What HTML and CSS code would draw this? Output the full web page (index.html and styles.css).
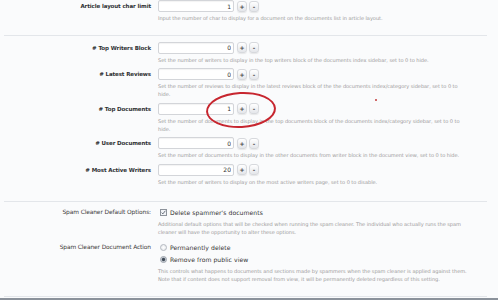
FILE: index.html
```html
<!DOCTYPE html>
<html lang="en">
<head>
    <meta charset="UTF-8">
    <title>Documents options</title>
    <link rel="stylesheet" href="styles.css">
</head>
<body>
    <div class="page">
        <div class="section first">
            <div class="row">
                <div class="label">Article layout char limit</div>
                <div class="control">
                    <div class="spin"><input class="num" type="text" value="1" readonly><button>+</button><button>-</button></div>
                    <p class="hint">Input the number of char to display for a document on the documents list in article layout.</p>
                </div>
            </div>
        </div>

        <div class="section second">
            <div class="row">
                <div class="label"># Top Writers Block</div>
                <div class="control">
                    <div class="spin"><input class="num" type="text" value="0" readonly><button>+</button><button>-</button></div>
                    <p class="hint">Set the number of writers to display in the top writers block of the documents index sidebar, set to 0 to hide.</p>
                </div>
            </div>
            <div class="row">
                <div class="label"># Latest Reviews</div>
                <div class="control">
                    <div class="spin"><input class="num" type="text" value="0" readonly><button>+</button><button>-</button></div>
                    <p class="hint">Set the number of reviews to display in the latest reviews block of the the documents index/category sidebar, set to 0 to hide.</p>
                </div>
            </div>
            <div class="row">
                <div class="label"># Top Documents</div>
                <div class="control">
                    <div class="spin"><input class="num" type="text" value="1" readonly><button>+</button><button>-</button></div>
                    <p class="hint">Set the number of documents to display in the top documents block of the documents index/category sidebar, set to 0 to hide.</p>
                </div>
            </div>
            <div class="row">
                <div class="label"># User Documents</div>
                <div class="control">
                    <div class="spin"><input class="num" type="text" value="0" readonly><button>+</button><button>-</button></div>
                    <p class="hint">Set the number of documents to display in the other documents from writer block in the document view, set to 0 to hide.</p>
                </div>
            </div>
            <div class="row">
                <div class="label"># Most Active Writers</div>
                <div class="control">
                    <div class="spin"><input class="num" type="text" value="20" readonly><button>+</button><button>-</button></div>
                    <p class="hint">Set the number of writers to display on the most active writers page, set to 0 to disable.</p>
                </div>
            </div>
        </div>

        <div class="section third">
            <div class="row plain">
                <div class="label">Spam Cleaner Default Options:</div>
                <div class="control">
                    <div class="choice"><span class="check"><svg viewBox="0 0 8 8" width="5" height="5"><path d="M1 4.2 L3 6.2 L7 1.2" fill="none" stroke="#4a5260" stroke-width="1.3"/></svg></span>Delete spammer's documents</div>
                    <p class="hint">Additional default options that will be checked when running the spam cleaner. The individual who actually runs the spam cleaner will have the opportunity to alter these options.</p>
                </div>
            </div>
            <div class="row plain">
                <div class="label">Spam Cleaner Document Action</div>
                <div class="control">
                    <div class="choice"><span class="radio"></span>Permanently delete</div>
                    <div class="choice"><span class="radio on"></span>Remove from public view</div>
                    <p class="hint">This controls what happens to documents and sections made by spammers when the spam cleaner is applied against them. Note that if content does not support removal from view, it will be permanently deleted regardless of this setting.</p>
                </div>
            </div>
        </div>

        <div class="circle"></div>
        <div class="dot"></div>
    </div>
</body>
</html>
```

FILE: styles.css
```css
body {
    margin: 0;
    background-color: #fafbfc;
    font-family: "DejaVu Sans", Tahoma, sans-serif;
    color: #333;
    overflow: hidden;
}

.page {
    position: relative;
    height: 298px;
    border-bottom: 2px solid #8b929b;
    overflow: hidden;
}

.section {
    display: flex;
    flex-direction: column;
    gap: 4.5px;
    margin: 0 11px 0 4px;
    border-bottom: 1px solid #e3e6ea;
}

.section.first {
    padding-bottom: 13px;
}

.section.second {
    padding-top: 5.5px;
    padding-bottom: 15.5px;
}

.section.third {
    padding-top: 5px;
    padding-bottom: 13px;
    gap: 6px;
}

.row {
    display: grid;
    grid-template-columns: 147px 1fr;
    column-gap: 7px;
}

.label {
    text-align: right;
    font-size: 5.5px;
    font-weight: bold;
    line-height: 12px;
    color: #2f3133;
    letter-spacing: -0.1px;
}

.row.plain .label {
    font-weight: normal;
    font-size: 5.9px;
    line-height: 10px;
    letter-spacing: -0.1px;
    color: #3a3a3a;
}

.spin {
    display: flex;
    align-items: center;
    gap: 2px;
    height: 12px;
}

.num {
    width: 76px;
    height: 12px;
    box-sizing: border-box;
    padding: 0 2px;
    margin: 0 1px 0 0;
    border: 1px solid #d3d5d9;
    border-radius: 2px;
    background-color: #fff;
    box-shadow: inset 0 1px 1px rgba(0, 0, 0, 0.05);
    text-align: right;
    font-family: inherit;
    font-size: 6px;
    color: #333;
}

.spin button {
    width: 10px;
    height: 11px;
    padding: 0;
    border: 1px solid #d7d9dd;
    border-radius: 3px;
    background: linear-gradient(#ffffff, #e4e6ea);
    box-shadow: 0 1px 1px rgba(0, 0, 0, 0.08);
    font-family: inherit;
    font-size: 6px;
    font-weight: bold;
    line-height: 9px;
    color: #444;
}

.hint {
    margin: 2px 0 0;
    max-width: 312px;
    font-size: 5.05px;
    line-height: 8px;
    color: #9a9a9a;
    letter-spacing: -0.05px;
}

.choice {
    display: flex;
    align-items: center;
    height: 10px;
    font-size: 6.1px;
    color: #333;
    letter-spacing: 0.05px;
}

.choice + .choice {
    margin-top: 2px;
}

.choice + .hint {
    margin-top: 3px;
}

.check {
    display: flex;
    align-items: center;
    justify-content: center;
    width: 5px;
    height: 5px;
    margin: 0 3px 0 2px;
    border: 1px solid #8d939b;
    background-color: #f1f3f6;
}

.radio {
    width: 5px;
    height: 5px;
    margin: 0 3px 0 2px;
    border: 1px solid #b4b9c0;
    border-radius: 50%;
    background: radial-gradient(#ffffff, #e2e5e9);
}

.radio.on {
    border-color: #9aa1aa;
    background: radial-gradient(#3f4a57 0, #3f4a57 1.2px, #cfd4da 2.2px);
}

.circle {
    position: absolute;
    left: 206px;
    top: 92px;
    width: 66px;
    height: 32px;
    border: 2px solid #c7262f;
    border-radius: 50%;
    transform: rotate(-3deg);
}

.dot {
    position: absolute;
    left: 375px;
    top: 99px;
    width: 2px;
    height: 2px;
    border-radius: 50%;
    background-color: #c23a3a;
}
```
